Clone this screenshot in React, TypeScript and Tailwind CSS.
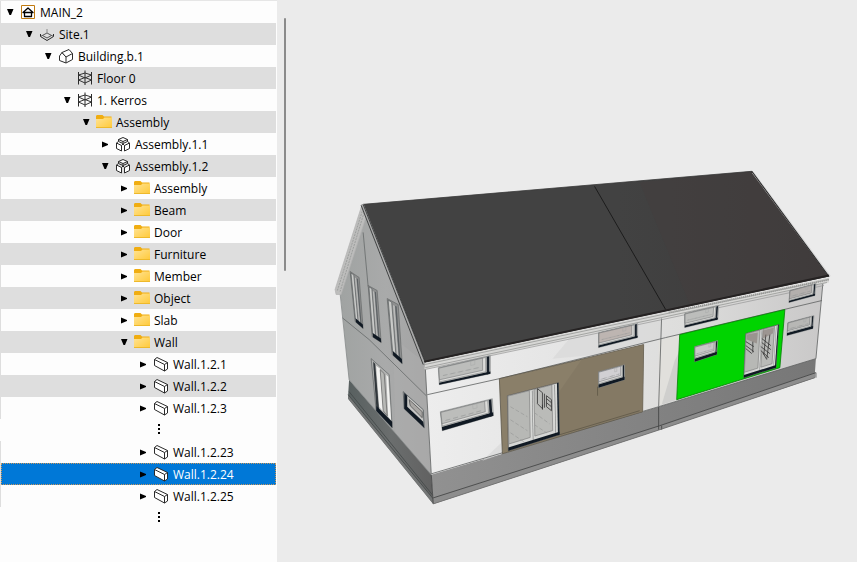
import { useState } from "react";

type IconName = "project" | "site" | "building" | "storey" | "folder" | "assembly" | "wall";

type TreeRow = {
  label: string;
  icon: IconName;
  level: number;
  state?: "open" | "closed";
};

const rows: (TreeRow | null)[] = [
  { label: "MAIN_2", icon: "project", level: 0, state: "open" },
  { label: "Site.1", icon: "site", level: 1, state: "open" },
  { label: "Building.b.1", icon: "building", level: 2, state: "open" },
  { label: "Floor 0", icon: "storey", level: 3 },
  { label: "1. Kerros", icon: "storey", level: 3, state: "open" },
  { label: "Assembly", icon: "folder", level: 4, state: "open" },
  { label: "Assembly.1.1", icon: "assembly", level: 5, state: "closed" },
  { label: "Assembly.1.2", icon: "assembly", level: 5, state: "open" },
  { label: "Assembly", icon: "folder", level: 6, state: "closed" },
  { label: "Beam", icon: "folder", level: 6, state: "closed" },
  { label: "Door", icon: "folder", level: 6, state: "closed" },
  { label: "Furniture", icon: "folder", level: 6, state: "closed" },
  { label: "Member", icon: "folder", level: 6, state: "closed" },
  { label: "Object", icon: "folder", level: 6, state: "closed" },
  { label: "Slab", icon: "folder", level: 6, state: "closed" },
  { label: "Wall", icon: "folder", level: 6, state: "open" },
  { label: "Wall.1.2.1", icon: "wall", level: 7, state: "closed" },
  { label: "Wall.1.2.2", icon: "wall", level: 7, state: "closed" },
  { label: "Wall.1.2.3", icon: "wall", level: 7, state: "closed" },
  null,
  { label: "Wall.1.2.23", icon: "wall", level: 7, state: "closed" },
  { label: "Wall.1.2.24", icon: "wall", level: 7, state: "closed" },
  { label: "Wall.1.2.25", icon: "wall", level: 7, state: "closed" },
  null,
];

const indents = ["pl-[4px]", "pl-[23px]", "pl-[42px]", "pl-[61px]", "pl-[80px]", "pl-[99px]", "pl-[118px]", "pl-[137px]"];

function RowIcon({ name }: { name: IconName }) {
  return (
    <svg viewBox="0 0 16 16" className="size-4 shrink-0" fill="none" stroke="#2a2a2a" strokeLinejoin="round" aria-hidden="true">
      {name === "project" && (
        <>
          <path d="M1.500 1.500h13v13h-13z" fill="#fff" stroke="#c07a10" strokeLinejoin="miter" />
          <path d="M3 8.500 8 4l5 4.500zM4.500 8.500v4h7v-4" stroke="#000" strokeWidth="1.300" />
        </>
      )}
      {name === "site" && (
        <>
          <path d="M1.500 8v2.500L8 14.500l6.500-4V8" />
          <path d="M1.500 10.500 8 7l6.500 3.500M3.500 9.500 8 12l4.500-2.500" stroke="#555" />
          <path d="M8 3v5" stroke="#888" />
        </>
      )}
      {name === "building" && (
        <>
          <path d="M1.500 8 4 4.500 8 9v6l-6.500-2.500z" fill="#fff" />
          <path d="M4 4.500 11 1.500l3.500 4L8 9zM14.500 5.500v6L8 15" fill="#fff" />
        </>
      )}
      {name === "storey" && (
        <>
          <path d="M1.500 2v12.500M14.500 2v12.500M8 .5V15" />
          <path d="M1.500 5 8 3l6.500 2L8 8zM1.500 10 8 7.500l6.500 2.500L8 13z" stroke="#333" />
        </>
      )}
      {name === "folder" && (
        <>
          <path d="M0 2.500C0 2 .5 1 1 1h5.500L8 2.500h7.500V6H0z" fill="#f0ad11" stroke="none" />
          <path d="M0 5h7l1.500-1.500H16V14H0z" fill="url(#folderFace)" stroke="none" />
          <path d="M0 13.500h16" stroke="#eeb92b" />
        </>
      )}
      {name === "assembly" && (
        <>
          <path d="M3.500 3.500 8 1.500l4.500 2L8 5.500z" fill="#fff" />
          <path d="M3.500 3.500v2L8 7.500l4.500-2v-2M8 5.500v2" />
          <path d="M1.500 7 6.500 9.500V15l-5-2.500zM14.500 7l-5 2.500V15l5-2.500z" fill="#fff" />
          <path d="m1.500 7 2-1.500M14.500 7l-2-1.500M6.500 9.500 8 8l1.500 1.500" />
        </>
      )}
      {name === "wall" && (
        <path d="M1.500 3.500 4 1.500l10.500 5V13l-3 2-10-5.500zM1.500 3.500l10 5V15M11.500 8.500l3-2" fill="#fff" />
      )}
    </svg>
  );
}

function Arrow({ state }: { state?: "open" | "closed" }) {
  return (
    <svg viewBox="0 0 10 10" className="size-[10px] shrink-0" aria-hidden="true">
      {state === "open" && <path d="M2 2h6.500L6 8H4.500z" fill="#000" />}
      {state === "closed" && <path d="M2 2.500v6l6-2.500V5z" fill="#000" />}
    </svg>
  );
}

function ModelTree() {
  const [selected, setSelected] = useState("Wall.1.2.24");

  return (
    <nav className="w-[277px] shrink-0 border-t border-[#e6e6e6] bg-[#fdfdfd]" aria-label="Model structure">
      <ul>
        {rows.map((row, i) => {
          if (!row) {
            return (
              <li key={i} className="flex h-[22px] flex-col gap-[2px] pt-[5px] pl-[158px]" aria-label="More items">
                <span className="size-[2px] bg-black" />
                <span className="size-[2px] bg-black" />
                <span className="size-[2px] bg-black" />
              </li>
            );
          }
          const active = row.label === selected;
          const striped = i % 2 === 1 && i < 19;
          return (
            <li key={i} className="mr-px border-l border-[#dedede]">
              <button
                type="button"
                onClick={() => setSelected(row.label)}
                aria-expanded={row.state ? row.state === "open" : undefined}
                className={`flex h-[22px] w-full items-center text-left text-[12px] whitespace-nowrap ${indents[row.level]} ${
                  active
                    ? "bg-[#0078d7] text-white outline-1 -outline-offset-1 outline-dotted outline-[#c9975c]"
                    : striped
                      ? "bg-[#dedede] text-black"
                      : "text-black"
                }`}
              >
                <Arrow state={row.state} />
                <span className="mr-1 ml-[5px]">
                  <RowIcon name={row.icon} />
                </span>
                <span className="pt-[2px]">{row.label}</span>
              </button>
            </li>
          );
        })}
      </ul>
    </nav>
  );
}

type Pt = [number, number];
type Quad = [Pt, Pt, Pt, Pt];

// Point inside a quad (top left, top right, bottom right, bottom left) at u, v in 0..1.
function at([a, b, c, d]: Quad, u: number, v: number): Pt {
  const mix = (p: Pt, q: Pt, t: number): Pt => [p[0] + (q[0] - p[0]) * t, p[1] + (q[1] - p[1]) * t];
  return mix(mix(a, b, u), mix(d, c, u), v);
}

function part(q: Quad, u0: number, v0: number, u1: number, v1: number) {
  return [at(q, u0, v0), at(q, u1, v0), at(q, u1, v1), at(q, u0, v1)].map((p) => p.join(",")).join(" ");
}

function FrontWindow({ quad, tint = "#bcbdbb", sill = 0.84 }: { quad: Quad; tint?: string; sill?: number }) {
  return (
    <g>
      <polygon points={part(quad, 0, 0, 1, 1)} fill="#c4c5c4" stroke="#777a7a" strokeWidth=".5" />
      <polygon points={part(quad, 0.93, 0.02, 0.98, 1)} fill="#18202a" />
      <polygon points={part(quad, 0, sill, 1, 1)} fill="#101923" />
      <polygon points={part(quad, 0.01, 0.04, 0.91, sill - 0.04)} fill="#dcdcda" stroke="#6c7070" strokeWidth=".5" />
      <polygon points={part(quad, 0.01, 0.04, 0.85, sill - 0.16)} fill={tint} stroke="#686b6c" strokeWidth=".5" />
      <polygon points={part(quad, 0.08, 0.52, 0.8, 0.52)} fill="none" stroke="#969897" strokeWidth=".4" strokeDasharray="5 3" />
      <polygon points={part(quad, 0.62, 0.06, 0.7, 0.3)} fill="none" stroke="#a2a4a3" strokeWidth=".4" />
    </g>
  );
}

function GableWindow({ quad }: { quad: Quad }) {
  return (
    <g>
      <polygon points={part(quad, 0, 0, 1, 1)} fill="#8e8f8f" stroke="#5e6161" strokeWidth=".6" />
      <polygon points={part(quad, 0.08, 0.02, 0.4, 0.94)} fill="#c9cac8" stroke="#5a5e60" strokeWidth=".7" />
      <polygon points={part(quad, 0.5, 0.06, 0.66, 0.94)} fill="#b9bab9" />
      <polygon points={part(quad, 0.7, 0.05, 0.84, 0.94)} fill="#5c6164" />
      <polygon points={part(quad, 0.1, 0.92, 1, 1)} fill="#101923" />
    </g>
  );
}

function GlassDoor({ quad, lines }: { quad: Quad; lines: string }) {
  return (
    <g>
      <polygon points={part(quad, 0, 0, 1, 1)} fill="#d6d7d5" stroke="#555" strokeWidth=".7" />
      <polygon points={part(quad, 0.01, 0.01, 0.43, 0.88)} fill="#b7b8b5" stroke="#777" strokeWidth=".6" />
      <polygon points={part(quad, 0.52, 0.01, 0.87, 0.88)} fill="#babbb8" stroke="#777" strokeWidth=".6" />
      <polygon points={part(quad, 0.48, 0.02, 0.49, 0.94)} fill="#6d7070" />
      <polygon points={part(quad, 0.92, 0.02, 0.93, 0.94)} fill="#6d7070" />
      <polygon points={part(quad, 0.97, 0, 1, 1)} fill="#17212a" />
      <polygon points={part(quad, 0, 0.94, 1, 1)} fill="#101923" />
      <path d={lines} fill="none" stroke="#333" strokeWidth=".8" />
    </g>
  );
}

function HouseModel() {
  return (
    <svg viewBox="287 0 570 562" className="h-auto w-full" role="img" aria-label="Semi-detached house model with one wall highlighted in green">
      <defs>
        <linearGradient id="roof" x1="0" x2="1">
          <stop offset="0" stopColor="#424242" />
          <stop offset=".55" stopColor="#424242" />
          <stop offset="1" stopColor="#3c3a3a" />
        </linearGradient>
        <linearGradient id="gable" x1="0" x2="1">
          <stop offset="0" stopColor="#a0a3a2" />
          <stop offset=".5" stopColor="#a9aaaa" />
          <stop offset="1" stopColor="#a3a3a3" />
        </linearGradient>
        <linearGradient id="front" x1="0" x2="1">
          <stop offset="0" stopColor="#ededed" />
          <stop offset=".3" stopColor="#e6e6e6" />
          <stop offset=".65" stopColor="#dddddc" />
          <stop offset="1" stopColor="#c9c8c8" />
        </linearGradient>
        <linearGradient id="plinthSide" x1="0" x2="1">
          <stop offset="0" stopColor="#586060" />
          <stop offset=".5" stopColor="#6b6e6e" />
          <stop offset="1" stopColor="#616161" />
        </linearGradient>
        <linearGradient id="plinthFront" x1="0" x2="1">
          <stop offset="0" stopColor="#919191" />
          <stop offset="1" stopColor="#777777" />
        </linearGradient>
      </defs>

      {/* plinth */}
      <path d="M350 379 432 473 434 503 349 398V394z" fill="url(#plinthSide)" />
      <path d="M349 394 434 498V503L349 398z" fill="#747676" />
      <path d="M349 394 434 498M350 391 434 495" fill="none" stroke="#424747" strokeWidth=".8" />
      <path d="M432 473 503 453 659 406 816 357 815 372V377L660 429 434 503z" fill="url(#plinthFront)" />
      <path d="M434 497 660 425 815 372V377L660 429 434 503z" fill="#8d8d8d" />
      <path d="M434 497 660 425 816 372V377M432 473 434 503M659 406V429M662 425V429" fill="none" stroke="#3e4040" strokeWidth=".8" />
      <path d="M434 503 660 429 815 377" fill="none" stroke="#6d6d6d" strokeWidth=".8" />

      {/* walls */}
      <path d="M365 211 341 291 350 379 432 474 426 363z" fill="url(#gable)" />
      <path d="M394 337 427 363 432 473 396 432z" fill="#adadad" opacity=".5" />
      <path d="M343 317 370 339 427 395M364 232 369 286" fill="none" stroke="#666a6a" strokeWidth=".8" />
      <path d="M341 293 350 379 432 474" fill="none" stroke="#868989" strokeWidth=".8" />
      <path d="M426 364 823 281 816 358 659 406 432 474z" fill="url(#front)" />
      <path d="M483 460 503 441V453zM553 358 570 338 662 316V338L599 354z" fill="#d8d8d8" opacity=".7" />
      <path d="M659 340 680 334 677 399 659 405z" fill="#e1e0dc" />
      <path d="M675 360 679 352 677 399 662 404z" fill="#cfcfcd" />
      <path d="M428 394 500 378 666 337 822 300M426 366 432 473 659 406 816 358 823 282M662 315 659 406" fill="none" stroke="#5e6060" strokeWidth=".8" />

      {/* roof */}
      <path d="M363 204 336 289 337 294 342 294 367 216z" fill="#bdbdbc" stroke="#b2b2b1" strokeWidth=".7" />
      <path d="M364 208 338 291M365 212 341 291" stroke="#999b9a" strokeWidth=".9" strokeDasharray="2 1" />
      <path d="M364 204 752 171 829 276 426 362z" fill="url(#roof)" />
      <path d="M640 182 690 304 829 276 752 171z" fill="#453f3f" opacity=".45" />
      <path d="M364 204 752 171" stroke="#3a3a3a" strokeWidth=".8" />
      <path d="M595 186 666 309" stroke="#171717" strokeWidth=".9" />
      <path d="M363 204 425 364" stroke="#aaa" strokeWidth="3" />
      <path d="M364 204 426 362M362 205 424 364" stroke="#272929" strokeWidth=".8" />
      <path d="M753 172 830 276" stroke="#d8d8d8" strokeWidth="2" />
      <path d="M752 171 829 276" stroke="#242424" />
      <path d="M426 362 829 277V282L425 369z" fill="#d7d7d5" />
      <path d="M425 364 829 279M426 367 827 282" stroke="#8c8e8d" strokeWidth=".7" />
      <path d="M425 369 824 285" stroke="#969796" strokeWidth=".7" />
      <path d="M669 312 829 279" stroke="#969795" strokeWidth="2" strokeDasharray="1 1" />
      <path d="M425 361 666 310 829 275" fill="none" stroke="#252222" strokeWidth="2" />

      {/* gable openings */}
      <GableWindow quad={[[351, 271], [360, 277], [364, 328], [356, 321]]} />
      <GableWindow quad={[[369, 285], [378, 290], [382, 342], [373, 336]]} />
      <GableWindow quad={[[388, 298], [399, 304], [403, 363], [393, 354]]} />
      <path d="M372 358 390 374 393 427 377 410z" fill="#b0b1b0" stroke="#606464" strokeWidth=".7" />
      <path d="M374 361 376 363 380 410 377 405z" fill="#32383c" />
      <path d="M377 365 381 368 384 411 380 406zM387 374 389 376 392 420 389 416z" fill="#f1f1ef" />
      <path d="M381 369 385 373 388 415 384 410z" fill="#b7b8b5" stroke="#555" strokeWidth=".6" />
      <path d="M377 405 393 421V427L377 410z" fill="#101923" />
      <path d="M404 391 424 409 425 427 405 408z" fill="#c5c5c3" stroke="#555b5e" strokeWidth=".8" />
      <path d="M405 392 408 395V406L424 421 425 427 405 408z" fill="#101923" />
      <path d="M410 399 423 411V417L411 405z" fill="#a9a7a4" stroke="#555" strokeWidth=".8" />

      {/* facade panels */}
      <path d="M500 378 644 344 643 411 503 453z" fill="#8a7f69" stroke="#5a5548" strokeWidth=".8" />
      <path d="M582 359 644 344 643 411 559 435V392z" fill="#817763" opacity=".65" />
      <path d="M560 434 640 410M598 386V395" stroke="#595344" strokeWidth=".7" />
      <path d="M680 334 785 309 780 367 677 399z" fill="#00d400" stroke="#087d08" strokeWidth=".8" />

      {/* front openings */}
      <FrontWindow quad={[[439, 367], [491, 355], [491, 373], [440, 384]]} sill={0.88} />
      <FrontWindow quad={[[441, 411], [493, 398], [494, 415], [443, 430]]} sill={0.8} />
      <FrontWindow quad={[[599, 332], [638, 323], [638, 337], [599, 347]]} tint="#bdb5b1" sill={0.86} />
      <FrontWindow quad={[[599, 371], [625, 364], [625, 379], [599, 387]]} tint="#d1d0d3" sill={0.8} />
      <FrontWindow quad={[[685, 313], [719, 305], [718, 319], [685, 327]]} sill={0.86} />
      <FrontWindow quad={[[695, 346], [718, 340], [717, 354], [695, 361]]} tint="#c8c8c8" sill={0.8} />
      <FrontWindow quad={[[790, 290], [816, 283], [815, 295], [789, 302]]} tint="#b3afad" sill={0.86} />
      <FrontWindow quad={[[788, 322], [814, 315], [813, 328], [787, 335]]} tint="#b7b7b5" sill={0.8} />
      <GlassDoor
        quad={[[508, 395], [559, 382], [560, 434], [509, 450]]}
        lines="M538 388 543 392V408L538 403zM545 393V407M547 395 552 399V410L547 406zM547 398 552 402M547 402 552 406M543 404V409"
      />
      <path d="M511 406 528 416M511 419 528 430M511 432 526 442M535 412 550 423M535 424 547 432" stroke="#999b99" strokeWidth=".7" strokeDasharray="4 2" />
      <GlassDoor
        quad={[[746, 333], [779, 324], [776, 367], [744, 377]]}
        lines="M746 341 754 346M746 345 754 351M746 348 752 353M753 341V352M762 338 771 345M762 342 771 349M761 346 770 353M761 350 769 357M763 352 767 359M766 334 764 354M770 334 767 358"
      />
      <path d="M747 334 758 332 757 343 747 339zM763 330 774 327 773 333 763 338z" fill="#7d7069" opacity=".5" />
    </svg>
  );
}

export default function App() {
  return (
    <div className="flex min-h-screen items-stretch bg-[#ebebeb] font-['Open_Sans','Noto_Sans',sans-serif]">
      <svg className="size-0" aria-hidden="true">
        <linearGradient id="folderFace" x1="0" y1="0" x2="1" y2="1">
          <stop offset="0" stopColor="#ffe394" />
          <stop offset="1" stopColor="#ffc938" />
        </linearGradient>
      </svg>
      <ModelTree />
      <div className="mt-[18px] ml-[7px] h-[253px] w-[2px] shrink-0 rounded-full bg-[#8b8b8b]" aria-hidden="true" />
      <main className="min-w-0 flex-1">
        <HouseModel />
      </main>
    </div>
  );
}
